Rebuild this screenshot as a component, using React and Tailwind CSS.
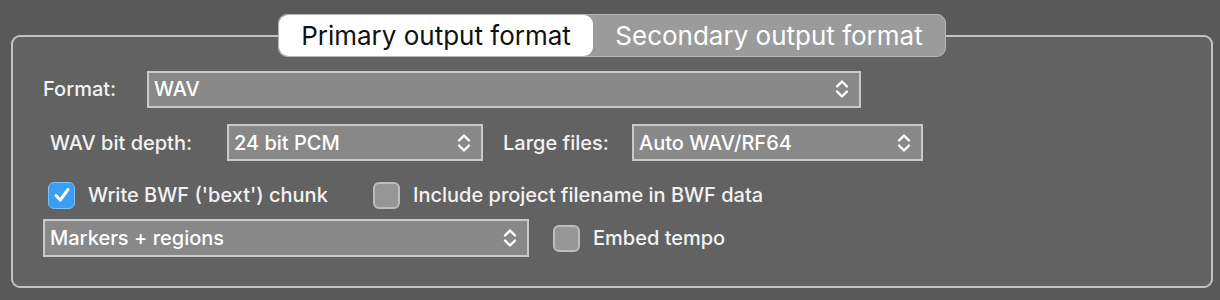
import React from "react";

const font = { fontFamily: "Inter, 'Noto Sans', 'Liberation Sans', sans-serif" };

// up/down chevrons of a mac popup button
const Updown = () => (
  <svg width="16" height="24" viewBox="0 0 16 24" fill="none" className="shrink-0">
    <path d="M3 9.5 L8 4.5 L13 9.5" stroke="white" strokeWidth="2.4" strokeLinecap="round" strokeLinejoin="round" />
    <path d="M3 14.5 L8 19.5 L13 14.5" stroke="white" strokeWidth="2.4" strokeLinecap="round" strokeLinejoin="round" />
  </svg>
);

const Select = ({ value, className }) => (
  <div
    className={`flex items-center justify-between h-[37px] bg-[#888888] border-2 border-[#c9c9c9] pl-[5px] pr-[9px] text-[20px] font-medium text-white ${className}`}
  >
    <span>{value}</span>
    <Updown />
  </div>
);

const Check = ({ checked, label, className }) => (
  <div className={`flex items-center gap-[13px] ${className}`}>
    {checked ? (
      <div className="w-[27px] h-[27px] rounded-[6px] bg-[#3a9ef2] border border-[#7cc2f7] flex items-center justify-center">
        <svg width="20" height="20" viewBox="0 0 20 20" fill="none">
          <path d="M4 10.5 L8.3 15 L16 4.5" stroke="white" strokeWidth="3" strokeLinecap="round" strokeLinejoin="round" />
        </svg>
      </div>
    ) : (
      <div className="w-[27px] h-[27px] rounded-[6px] bg-[#969696] border-2 border-[#bdbdbd]" />
    )}
    <span className="text-[20px] font-medium text-[#f2f2f2]">{label}</span>
  </div>
);

export default function App() {
  return (
    <div className="w-[1220px] h-[300px] bg-[#595959] pt-[14px]" style={font}>
      {/* tabs */}
      <div className="relative z-10 flex justify-center -mb-[22px] pl-[4px]">
        <div className="flex h-[43px] rounded-[9px] bg-[#9b9b9b] border border-[#b5b5b5] overflow-hidden">
          <div className="w-[314px] h-full bg-white rounded-[9px] flex items-center justify-center text-[26px] text-[#111]">
            Primary output format
          </div>
          <div className="w-[352px] h-full flex items-center justify-center text-[26px] text-white">
            Secondary output format
          </div>
        </div>
      </div>

      {/* panel */}
      <div className="ml-[11px] w-[1202px] h-[253px] border-2 border-[#c4c4c4] rounded-[9px] bg-[#626262] pt-[34px]">
        <div className="flex items-center h-[36px]">
          <span className="ml-[30px] w-[104px] text-[20px] font-medium text-[#f2f2f2]">Format:</span>
          <Select value="WAV" className="w-[714px] h-[37px]" />
        </div>

        <div className="flex items-center mt-[17px]">
          <span className="ml-[37px] w-[177px] text-[20px] font-medium text-[#f2f2f2]">WAV bit depth:</span>
          <Select value="24 bit PCM" className="w-[256px]" />
          <span className="ml-[20px] w-[129px] text-[20px] font-medium text-[#f2f2f2]">Large files:</span>
          <Select value="Auto WAV/RF64" className="w-[291px]" />
        </div>

        <div className="flex items-center mt-[19px]">
          <Check checked label="Write BWF ('bext') chunk" className="ml-[35px] w-[325px]" />
          <Check label="Include project filename in BWF data" />
        </div>

        <div className="flex items-center mt-[9px]">
          <Select value="Markers + regions" className="ml-[30px] w-[486px] h-[38px]" />
          <Check label="Embed tempo" className="ml-[24px]" />
        </div>
      </div>
    </div>
  );
}
